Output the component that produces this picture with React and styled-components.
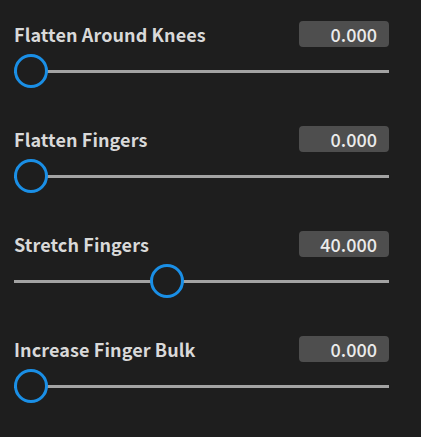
import { useState } from "react";
import styled, { createGlobalStyle } from "styled-components";

const GlobalStyle = createGlobalStyle`
  html, body {
    margin: 0;
    background: #1e1e1e;
  }
  body {
    font-family: "Noto Sans CJK JP", "Noto Sans", sans-serif;
  }
`;

const sliders = [
  { id: "knees", label: "Flatten Around Knees", value: 0 },
  { id: "flatFingers", label: "Flatten Fingers", value: 0 },
  { id: "stretchFingers", label: "Stretch Fingers", value: 40 },
  { id: "bulk", label: "Increase Finger Bulk", value: 0 },
];

export default function App() {
  const [values, setValues] = useState(
    Object.fromEntries(sliders.map((s) => [s.id, s.value]))
  );

  function handleChange(id, event) {
    setValues({ ...values, [id]: Number(event.target.value) });
  }

  return (
    <StyledPanel>
      <GlobalStyle />
      {sliders.map((slider) => (
        <StyledRow key={slider.id}>
          <StyledHeader>
            <StyledLabel htmlFor={slider.id}>{slider.label}</StyledLabel>
            <StyledValue>{values[slider.id].toFixed(3)}</StyledValue>
          </StyledHeader>
          <StyledRange
            id={slider.id}
            min="0"
            max="100"
            step="1"
            value={values[slider.id]}
            onChange={(event) => handleChange(slider.id, event)}
          />
        </StyledRow>
      ))}
    </StyledPanel>
  );
}

const StyledPanel = styled.div`
  display: flex;
  flex-direction: column;
  padding: 0 32px 0 14px;
  min-height: 437px;
  box-sizing: border-box;
`;

const StyledRow = styled.div`
  display: flex;
  flex-direction: column;
  gap: 7px;
  height: 105px;
  padding-top: 21px;
  box-sizing: border-box;
`;

const StyledHeader = styled.div`
  display: flex;
  align-items: center;
  justify-content: space-between;
  height: 26px;
`;

const StyledLabel = styled.label`
  font-size: 18px;
  font-weight: 700;
  color: #d9d9d9;
  line-height: 26px;
  letter-spacing: 0.1px;
`;

const StyledValue = styled.div`
  width: 90px;
  height: 26px;
  box-sizing: border-box;
  padding: 0 12px;
  border-radius: 4px;
  background: #4e4e4e;
  color: #ebebeb;
  font-size: 18px;
  font-weight: 500;
  line-height: 26px;
  text-align: right;
`;

const StyledRange = styled.input.attrs({ type: "range" })`
  -webkit-appearance: none;
  appearance: none;
  width: 100%;
  height: 34px;
  margin: 0;
  background: transparent;
  cursor: pointer;

  &::-webkit-slider-runnable-track {
    height: 3px;
    background: #a3a3a3;
    border: none;
  }

  &::-webkit-slider-thumb {
    -webkit-appearance: none;
    width: 34px;
    height: 34px;
    margin-top: -15.5px;
    border-radius: 50%;
    border: 3px solid #1a8fe6;
    background: #1e1e1e;
    box-sizing: border-box;
  }

  &:focus {
    outline: none;
  }
`;
